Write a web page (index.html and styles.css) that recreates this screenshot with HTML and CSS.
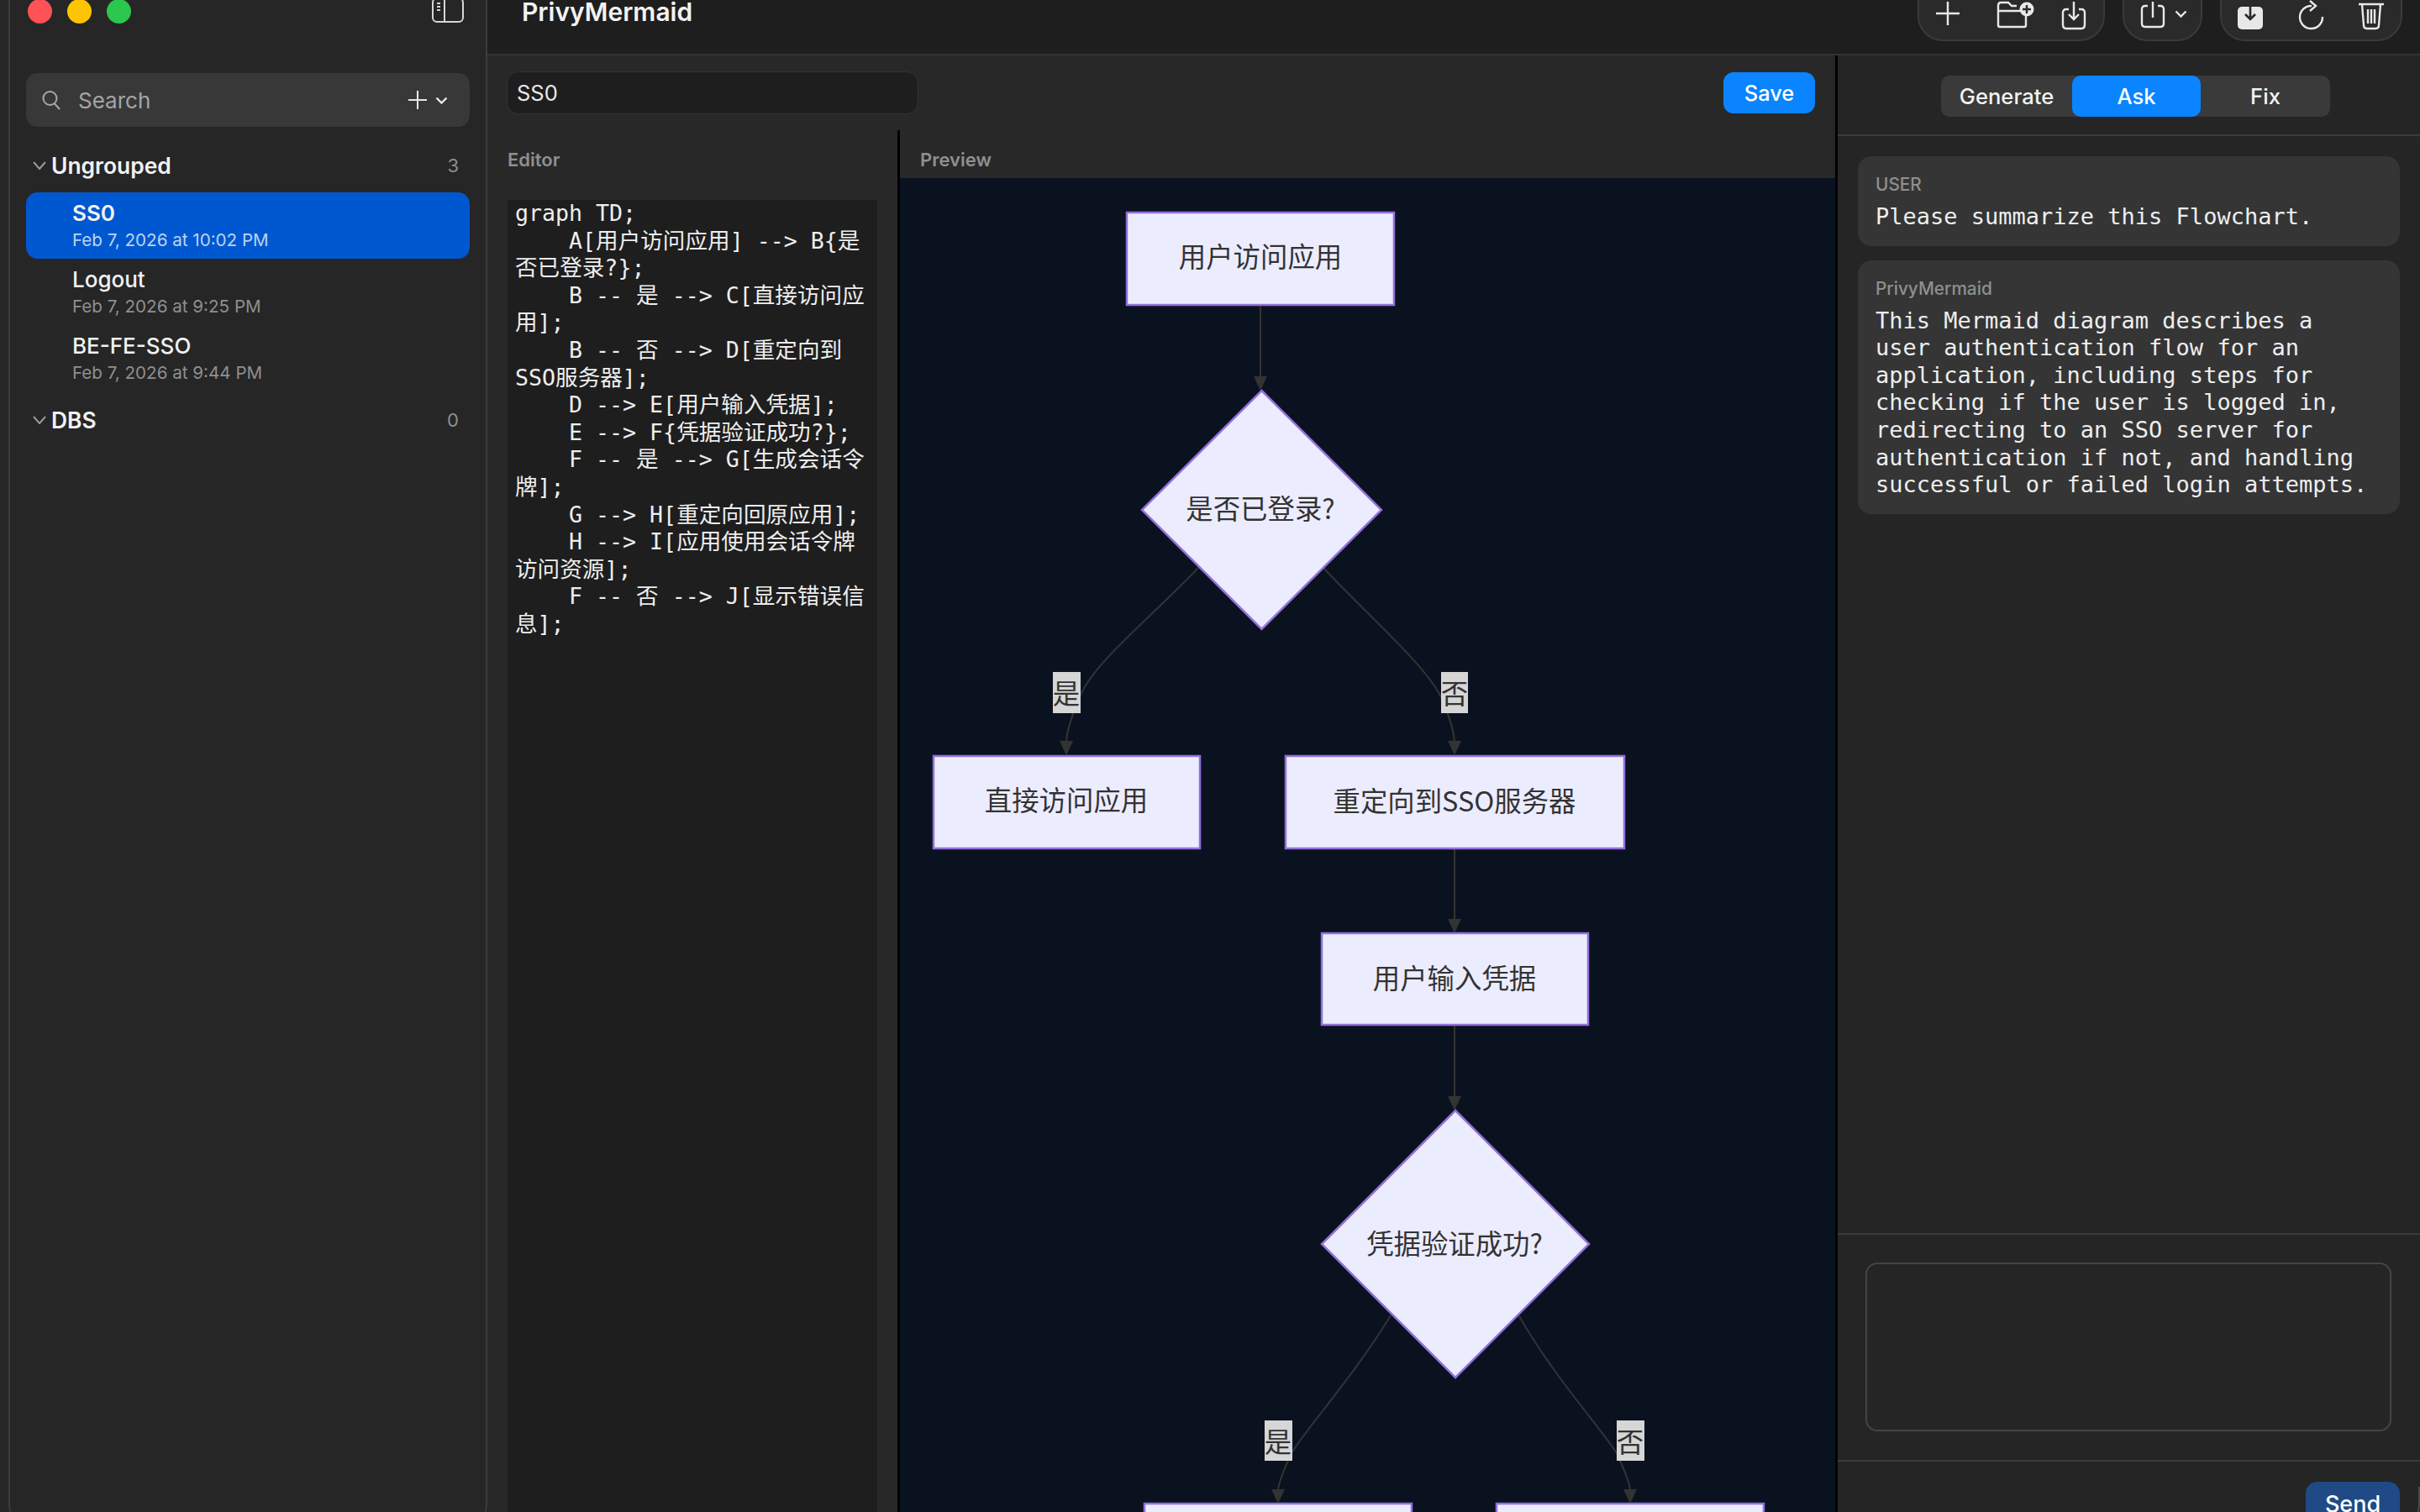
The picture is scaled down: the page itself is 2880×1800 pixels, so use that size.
FILE: index.html
```html
<!DOCTYPE html>
<html lang="en">

<head>
    <meta charset="UTF-8">
    <title>PrivyMermaid</title>
    <link rel="stylesheet" href="styles.css">
</head>

<body>
    <aside class="sidebar">
        <div class="titlebar">
            <span class="light light-red"></span>
            <span class="light light-yellow"></span>
            <span class="light light-green"></span>
            <svg class="sidebar-toggle" viewBox="0 0 38 28" width="38" height="28">
                <rect x="1" y="-1" width="36" height="28" rx="5" fill="none" stroke="#d6d6d6" stroke-width="2" />
                <path d="M15 -1V27M6 5H10M6 9H10M6 13H10" fill="none" stroke="#d6d6d6" stroke-width="2" />
            </svg>
        </div>

        <div class="search">
            <svg class="search-icon" viewBox="0 0 22 24" width="22" height="24">
                <circle cx="9.5" cy="10" r="8" fill="none" stroke="#a8a8a8" stroke-width="2" />
                <path d="M15 16.5L21 23" fill="none" stroke="#a8a8a8" stroke-width="2" />
            </svg>
            <span class="search-text">Search</span>
            <svg class="search-plus" viewBox="0 0 22 22" width="22" height="22">
                <path d="M11 0V22M0 11H22" fill="none" stroke="#e8e8e8" stroke-width="2" />
            </svg>
            <svg class="search-chevron" viewBox="0 0 15 9" width="15" height="9">
                <path d="M1.5 1.5L7.5 7.5L13.5 1.5" fill="none" stroke="#e8e8e8" stroke-width="2.4" />
            </svg>
        </div>

        <div class="group-head group-first">
            <svg class="group-chevron" viewBox="0 0 16 10" width="16" height="10">
                <path d="M1 1L8 9L15 1" fill="none" stroke="#9a9a9a" stroke-width="2" />
            </svg>
            <span class="group-name">Ungrouped</span>
            <span class="group-count">3</span>
        </div>

        <div class="doc doc-active">
            <div class="doc-name">SS0</div>
            <div class="doc-date">Feb 7, 2026 at 10:02 PM</div>
        </div>
        <div class="doc">
            <div class="doc-name">Logout</div>
            <div class="doc-date">Feb 7, 2026 at 9:25 PM</div>
        </div>
        <div class="doc">
            <div class="doc-name">BE-FE-SSO</div>
            <div class="doc-date">Feb 7, 2026 at 9:44 PM</div>
        </div>

        <div class="group-head group-second">
            <svg class="group-chevron" viewBox="0 0 16 10" width="16" height="10">
                <path d="M1 1L8 9L15 1" fill="none" stroke="#9a9a9a" stroke-width="2" />
            </svg>
            <span class="group-name">DBS</span>
            <span class="group-count">0</span>
        </div>
    </aside>

    <div class="window">
        <header class="topbar">
            <h1 class="app-title">PrivyMermaid</h1>
            <div class="toolbar">
                <div class="tool-group tool-group-file">
                    <svg viewBox="0 0 28 28" width="28" height="28" class="tool-plus">
                        <path d="M14 0V28M0 14H28" class="icon-line" />
                    </svg>
                    <svg viewBox="0 0 46 31" width="46" height="31" class="tool-folder">
                        <path d="M2 4V28Q2 30 4 30H33Q35 30 35 28V17M2 11H28M2 5Q2 1 5 1H14L18 5H24" class="icon-line" />
                        <circle cx="36" cy="9" r="8.5" fill="#e8e8e8" />
                        <path d="M36 4V14M31 9H41" fill="none" stroke="#2a2a2a" stroke-width="2.4" />
                    </svg>
                    <svg viewBox="0 0 30 33" width="30" height="33" class="tool-import">
                        <path d="M9 9H6Q2 9 2 13V27Q2 32 6 32H24Q28 32 28 27V13Q28 9 24 9H21M15 0V21M9 15L15 21L21 15" class="icon-line" />
                    </svg>
                </div>
                <div class="tool-group tool-group-share">
                    <svg viewBox="0 0 30 31" width="30" height="31" class="tool-share">
                        <path d="M9 5H6Q2 5 2 9V26Q2 30 6 30H24Q28 30 28 26V9Q28 5 24 5H21M15 0V19" class="icon-line" />
                    </svg>
                    <svg viewBox="0 0 15 9" width="15" height="9" class="tool-chevron">
                        <path d="M1.5 1.5L7.5 7.5L13.5 1.5" fill="none" stroke="#e8e8e8" stroke-width="2.4" />
                    </svg>
                </div>
                <div class="tool-group tool-group-doc">
                    <svg viewBox="0 0 30 33" width="30" height="33" class="tool-save">
                        <rect x="0" y="6" width="30" height="27" rx="5" fill="#e8e8e8" />
                        <path d="M15 0V21M9 15L15 21L21 15" fill="none" stroke="#2a2a2a" stroke-width="2.6" />
                    </svg>
                    <svg viewBox="0 0 30 32" width="30" height="32" class="tool-reload">
                        <path d="M15 5A13.5 13.5 0 1 0 28 18M13 -1L20 5L13 11" class="icon-line" />
                    </svg>
                    <svg viewBox="0 0 30 33" width="30" height="33" class="tool-trash">
                        <path d="M0 3H30M4 3L6 28Q6 32 10 32H20Q24 32 24 28L26 3M11 9V26M15 9V26M19 9V26" class="icon-line" />
                    </svg>
                </div>
            </div>
        </header>

        <div class="content">
            <main class="workspace">
                <div class="title-row">
                    <div class="title-input">SS0</div>
                    <button class="save-button">Save</button>
                </div>
                <div class="panes">
                    <section class="editor-pane">
                        <div class="pane-label">Editor</div>
                        <pre class="code">graph TD;
    A[用户访问应用] --&gt; B{是
否已登录?};
    B -- 是 --&gt; C[直接访问应
用];
    B -- 否 --&gt; D[重定向到
SSO服务器];
    D --&gt; E[用户输入凭据];
    E --&gt; F{凭据验证成功?};
    F -- 是 --&gt; G[生成会话令
牌];
    G --&gt; H[重定向回原应用];
    H --&gt; I[应用使用会话令牌
访问资源];
    F -- 否 --&gt; J[显示错误信
息];</pre>
                    </section>
                    <section class="preview-pane">
                        <div class="pane-label preview-label">Preview</div>
                        <div class="preview-canvas">
                            <svg class="flowchart" viewBox="1071 212 1113 1588">
                                <path class="edge" d="M1500 364V450" />
                                <path class="edge" d="M1426 676C1370 735 1300 790 1285 830C1272 860 1269 875 1269 885" />
                                <path class="edge" d="M1575 676C1630 735 1695 790 1715 830C1728 860 1731 875 1731 885" />
                                <path class="edge" d="M1731 1010V1097" />
                                <path class="edge" d="M1731 1220V1308" />
                                <path class="edge" d="M1655 1566C1610 1640 1555 1700 1537 1730C1523 1760 1521 1770 1521 1775" />
                                <path class="edge" d="M1808 1567C1850 1640 1905 1700 1924 1730C1938 1760 1940 1770 1940 1775" />

                                <path class="arrow" d="M1492 448H1508L1500 465Z" />
                                <path class="arrow" d="M1261 882H1277L1269 899Z" />
                                <path class="arrow" d="M1723 882H1739L1731 899Z" />
                                <path class="arrow" d="M1723 1094H1739L1731 1111Z" />
                                <path class="arrow" d="M1723 1305H1739L1731 1322Z" />
                                <path class="arrow" d="M1513 1773H1529L1521 1790Z" />
                                <path class="arrow" d="M1932 1773H1948L1940 1790Z" />

                                <rect class="node" x="1341" y="253" width="318" height="110" />
                                <polygon class="node" points="1501.5,465 1644,607 1501.5,749 1359,607" />
                                <rect class="node" x="1111" y="900" width="317" height="110" />
                                <rect class="node" x="1530" y="900" width="403" height="110" />
                                <rect class="node" x="1573" y="1111" width="317" height="109" />
                                <polygon class="node" points="1732,1322 1891,1481 1732,1640 1573,1481" />
                                <rect class="node" x="1362" y="1790" width="318" height="60" />
                                <rect class="node" x="1781" y="1790" width="318" height="60" />

                                <rect class="edge-box" x="1253" y="800" width="33" height="49" />
                                <rect class="edge-box" x="1715" y="800" width="32" height="49" />
                                <rect class="edge-box" x="1505" y="1691" width="33" height="48" />
                                <rect class="edge-box" x="1924" y="1691" width="33" height="48" />

                                <text class="node-text" x="1500" y="303">用户访问应用</text>
                                <text class="node-text" x="1500" y="603">是否已登录?</text>
                                <text class="node-text" x="1269" y="950">直接访问应用</text>
                                <text class="node-text" x="1731" y="951">重定向到SSO服务器</text>
                                <text class="node-text" x="1731" y="1162">用户输入凭据</text>
                                <text class="node-text" x="1731" y="1478">凭据验证成功?</text>
                                <text class="node-text" x="1269" y="823">是</text>
                                <text class="node-text" x="1731" y="823">否</text>
                                <text class="node-text" x="1521" y="1714">是</text>
                                <text class="node-text" x="1940" y="1714">否</text>
                            </svg>
                        </div>
                    </section>
                </div>
            </main>

            <aside class="assistant">
                <div class="mode-bar">
                    <div class="segments">
                        <span class="segment">Generate</span>
                        <span class="segment segment-active">Ask</span>
                        <span class="segment">Fix</span>
                    </div>
                </div>
                <div class="messages">
                    <div class="message">
                        <div class="message-role">USER</div>
                        <pre class="message-text">Please summarize this Flowchart.</pre>
                    </div>
                    <div class="message">
                        <div class="message-role">PrivyMermaid</div>
                        <pre class="message-text">This Mermaid diagram describes a
user authentication flow for an
application, including steps for
checking if the user is logged in,
redirecting to an SSO server for
authentication if not, and handling
successful or failed login attempts.</pre>
                    </div>
                </div>
                <div class="composer">
                    <div class="composer-box"></div>
                </div>
                <div class="send-row">
                    <button class="send-button">Send</button>
                </div>
            </aside>
        </div>
    </div>

    <div class="window-corner"></div>
</body>

</html>
```

FILE: styles.css
```css
* {
    box-sizing: border-box;
}

html,
body {
    margin: 0;
    height: 100%;
}

body {
    position: relative;
    width: 2880px;
    height: 1800px;
    display: flex;
    overflow: hidden;
    background-color: #262626;
    color: #f2f2f2;
    font-family: Inter, "Noto Sans CJK SC", sans-serif;
}

/* sidebar */

.sidebar {
    width: 570px;
    height: 1830px;
    margin-left: 10px;
    padding: 0 19px;
    background-color: #262626;
    border: 2px solid #3c3c3c;
    border-top: none;
    border-radius: 0 0 40px 40px;
    flex-shrink: 0;
}

.titlebar {
    height: 87px;
    padding-left: 2px;
    display: flex;
    align-items: flex-start;
    gap: 18px;
    margin-top: -1px;
}

.light {
    width: 29px;
    height: 29px;
    border-radius: 50%;
}

.light-red {
    background-color: #ff5257;
}

.light-yellow {
    background-color: #fdc500;
}

.light-green {
    background-color: #2bc84d;
}

.sidebar-toggle {
    margin-left: auto;
    margin-right: 7px;
    overflow: visible;
}

.search {
    height: 64px;
    margin-top: 1px;
    padding: 0 26px 0 19px;
    display: flex;
    align-items: center;
    background-color: #383838;
    border-radius: 14px;
}

.search-text {
    margin-left: 21px;
    font-size: 26px;
    color: #a5a5a5;
}

.search-plus {
    margin-left: auto;
}

.search-chevron {
    margin-left: 10px;
}

.group-head {
    display: flex;
    align-items: center;
    height: 34px;
    padding: 0 13px 0 8px;
}

.group-first {
    margin-top: 29px;
    margin-bottom: 15px;
}

.group-second {
    margin-top: 17px;
}

.group-chevron {
    margin-right: 6px;
}

.group-name {
    font-size: 26.4px;
    font-weight: 600;
}

.group-count {
    margin-left: auto;
    font-size: 22px;
    color: #8e8e8e;
}

.doc {
    height: 79px;
    padding: 9px 0 0 55px;
    border-radius: 14px;
}

.doc-active {
    background-color: #0058d0;
}

.doc-name {
    font-size: 26px;
    font-weight: 500;
    line-height: 32px;
}

.doc-date {
    margin-top: 2px;
    font-size: 20.6px;
    line-height: 28px;
    color: #8f8f8f;
}

.doc-active .doc-name {
    font-weight: 600;
}

.doc-active .doc-date {
    color: #bcd3f2;
}

/* main window */

.window {
    flex: 1;
    min-width: 0;
    display: flex;
    flex-direction: column;
}

.window-corner {
    position: absolute;
    right: 0;
    top: 1770px;
    width: 40px;
    height: 60px;
    border-right: 2px solid #4a4a4a;
    border-radius: 0 0 40px 0;
}

.topbar {
    height: 66px;
    padding: 0 21px 0 41px;
    display: flex;
    justify-content: space-between;
    background-color: #1e1e1e;
    border-bottom: 2px solid #333;
}

.app-title {
    margin: 0;
    font-size: 30px;
    font-weight: 600;
    line-height: 28px;
}

.toolbar {
    display: flex;
    gap: 21px;
}

.tool-group {
    height: 88px;
    margin-top: -39px;
    display: flex;
    align-items: flex-start;
    background-color: #2a2a2a;
    border: 2px solid #3a3a3a;
    border-radius: 30px;
}

.tool-group svg {
    margin-top: 39px;
    overflow: visible;
    flex-shrink: 0;
}

.tool-group-file {
    width: 223px;
    padding-left: 20px;
}

.tool-group-share {
    width: 95px;
    padding-left: 19px;
}

.tool-group-doc {
    width: 217px;
    padding-left: 19px;
}

.icon-line {
    fill: none;
    stroke: #e8e8e8;
    stroke-width: 2.4;
}

.tool-group .tool-folder {
    margin-left: 44px;
}

.tool-group .tool-import {
    margin-left: 31px;
}

.tool-group .tool-chevron {
    margin-top: 49px;
    margin-left: 11px;
}

.tool-group .tool-reload {
    margin-left: 43px;
}

.tool-group .tool-trash {
    margin-left: 41px;
}

.content {
    flex: 1;
    min-height: 0;
    display: flex;
}

/* editor and preview */

.workspace {
    width: 1604px;
    display: flex;
    flex-direction: column;
    background-color: #282828;
    flex-shrink: 0;
}

.title-row {
    height: 89px;
    padding: 19px 24px 0 23px;
    display: flex;
    justify-content: space-between;
    align-items: flex-start;
}

.title-input {
    width: 490px;
    height: 51px;
    padding-left: 11px;
    font-size: 25.5px;
    line-height: 49px;
    color: #e8e8e8;
    background-color: #1e1e1e;
    border: 1px solid #333;
    border-radius: 14px;
}

.save-button {
    width: 109px;
    height: 49px;
    margin-top: 1px;
    border: none;
    border-radius: 12px;
    background-color: #0a84ff;
    color: #fff;
    font-family: inherit;
    font-size: 25.4px;
    font-weight: 500;
}

.panes {
    flex: 1;
    min-height: 0;
    display: flex;
}

.editor-pane {
    width: 488px;
    padding-left: 24px;
    display: flex;
    flex-direction: column;
    flex-shrink: 0;
}

.pane-label {
    height: 57px;
    padding-top: 21px;
    font-size: 22px;
    font-weight: 600;
    line-height: 28px;
    color: #8f8f8f;
}

.editor-pane .pane-label {
    margin-bottom: 26px;
}

.code {
    flex: 1;
    width: 440px;
    margin: 0;
    padding: 0 0 0 9px;
    font-family: "DejaVu Sans Mono", "Noto Sans CJK SC", monospace;
    font-size: 26.6px;
    line-height: 32.6px;
    color: #eee;
    background-color: #1e1e1e;
}

.preview-pane {
    flex: 1;
    min-width: 0;
    display: flex;
    flex-direction: column;
    border-left: 3px solid #000;
}

.preview-label {
    padding-left: 24px;
}

.preview-canvas {
    flex: 1;
    min-height: 0;
    background-color: #0a1220;
    overflow: hidden;
}

.flowchart {
    display: block;
    width: 100%;
    height: 100%;
}

.edge {
    fill: none;
    stroke: #333;
    stroke-width: 2;
}

.arrow {
    fill: #333;
}

.node {
    fill: #ececff;
    stroke: #9370db;
    stroke-width: 2.5;
}

.edge-box {
    fill: #d6d6d6;
}

.node-text {
    font-family: "Noto Sans CJK SC", sans-serif;
    font-size: 32.4px;
    fill: #333;
    text-anchor: middle;
    dominant-baseline: central;
}

/* assistant panel */

.assistant {
    flex: 1;
    min-width: 0;
    display: flex;
    flex-direction: column;
    background-color: #252525;
    border-left: 3px solid #000;
}

.mode-bar {
    height: 96px;
    padding: 24px 0 0 123px;
    border-bottom: 2px solid #3c3c3c;
}

.segments {
    width: 463px;
    height: 49px;
    display: grid;
    grid-template-columns: 156px 153px 154px;
    background-color: #3a3a3a;
    border-radius: 10px;
}

.segment {
    font-size: 25.6px;
    font-weight: 500;
    line-height: 49px;
    text-align: center;
    border-radius: 10px;
}

.segment-active {
    background-color: #0a84ff;
    color: #fff;
}

.messages {
    flex: 1;
    min-height: 0;
    padding: 24px 24px 0 24px;
    display: flex;
    flex-direction: column;
    align-items: stretch;
    gap: 17px;
}

.message {
    padding: 20px 21px 18px;
    background-color: #353535;
    border-radius: 16px;
}

.message-role {
    font-size: 20.8px;
    font-weight: 500;
    line-height: 28px;
    color: #8f8f8f;
}

.message-text {
    margin: 8px 0 0;
    font-family: "DejaVu Sans Mono", monospace;
    font-size: 27px;
    line-height: 32.6px;
    color: #eee;
}

.composer {
    height: 272px;
    padding: 33px 34px 0 33px;
    border-top: 2px solid #3c3c3c;
    border-bottom: 2px solid #3c3c3c;
}

.composer-box {
    height: 201px;
    border: 2px solid #444;
    border-radius: 14px;
}

.send-row {
    height: 60px;
    padding: 24px 24px 0 0;
    display: flex;
    justify-content: flex-end;
}

.send-button {
    width: 112px;
    height: 52px;
    border: none;
    border-radius: 14px;
    background-color: #1f4a85;
    color: #fff;
    font-family: inherit;
    font-size: 27px;
    font-weight: 500;
}
```
